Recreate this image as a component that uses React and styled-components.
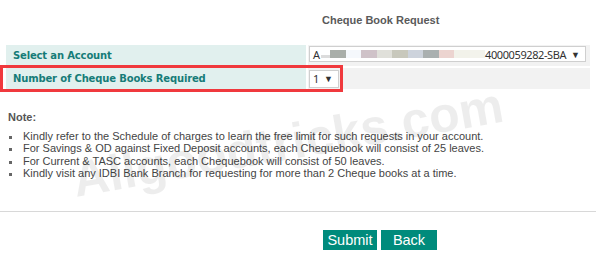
import React from 'react';
import styled, { createGlobalStyle } from 'styled-components';

const GlobalStyle = createGlobalStyle`
    body {
        margin: 0;
        background: #ffffff;
        font-family: "Liberation Sans", Arial, sans-serif;
    }
`;

// pixelated blocks hiding the account holder name
const blurBlocks = ['#dcdcdc', '#a9aea9', '#f5f8fc', '#cfc2c8', '#e0e0da', '#c8c8bc', '#cdd3dc', '#aab0b0', '#ecd4d0', '#f2f2ea', '#f3f3ec'];

const notes = [
    'Kindly refer to the Schedule of charges to learn the free limit for such requests in your account.',
    'For Savings & OD against Fixed Deposit accounts, each Chequebook will consist of 25 leaves.',
    'For Current & TASC accounts, each Chequebook will consist of 50 leaves.',
    'Kindly visit any IDBI Bank Branch for requesting for more than 2 Cheque books at a time.',
];

export default function App() {
    return (
        <>
            <GlobalStyle />
            <Page>
                <Title>Cheque Book Request</Title>
                <FormTable>
                    <Row>
                        <LabelCell>Select an Account</LabelCell>
                        <FieldCell>
                            <Select width="277px">
                                <SelectText>
                                    A
                                    <Blur>
                                        {blurBlocks.map((c, i) => (
                                            <BlurBlock key={c} color={c} first={i === 0} />
                                        ))}
                                    </Blur>
                                    <AccountNo>4000059282-SBA</AccountNo>
                                </SelectText>
                                <Arrow>▼</Arrow>
                            </Select>
                        </FieldCell>
                    </Row>
                    <Row>
                        <LabelCell>Number of Cheque Books Required</LabelCell>
                        <FieldCell>
                            <Select width="30px" tall>
                                <SelectText>1</SelectText>
                                <Arrow>▼</Arrow>
                            </Select>
                        </FieldCell>
                    </Row>
                    <Highlight />
                </FormTable>

                <NoteTitle>Note:</NoteTitle>
                <NoteList>
                    {notes.map((n) => (
                        <li key={n}>{n}</li>
                    ))}
                </NoteList>

                <Divider />

                <Actions>
                    <Button w="54px">Submit</Button>
                    <Button w="56px">Back</Button>
                </Actions>

                <Watermark>Allgoodtricks.com</Watermark>
            </Page>
        </>
    );
}

const Page = styled.div`
    position: relative;
    width: 596px;
    height: 265px;
    overflow: hidden;
    background: #ffffff;
`;

const Title = styled.h1`
    margin: 0;
    padding: 14px 0 0 322px;
    font-size: 11px;
    line-height: 13px;
    font-weight: 700;
    color: #5a5a5a;
`;

const FormTable = styled.div`
    position: relative;
    display: flex;
    flex-direction: column;
    gap: 2px;
    margin: 18px 0 0 6px;
    width: 584px;
`;

const Row = styled.div`
    display: grid;
    grid-template-columns: 300px 1fr;
    gap: 2px;
    height: 21px;
`;

const LabelCell = styled.div`
    display: flex;
    align-items: center;
    padding-left: 7px;
    background: #e1f0ee;
    color: #167c78;
    font-family: "DejaVu Sans", Verdana, sans-serif;
    font-weight: 700;
    font-size: 10px;
    letter-spacing: -0.15px;
`;

const FieldCell = styled.div`
    display: flex;
    align-items: center;
    padding-left: 1px;
    background: #f2f2f2;
`;

const Select = styled.div`
    display: flex;
    align-items: center;
    justify-content: space-between;
    box-sizing: border-box;
    width: ${(p) => p.width};
    height: ${(p) => (p.tall ? '18px' : '16px')};
    margin-top: ${(p) => (p.tall ? '0' : '-3px')};
    padding: 0 5px 0 3px;
    background: #ffffff;
    border: 1px solid #cfcfcf;
    font-family: "Noto Sans", "Open Sans", sans-serif;
    font-size: 11px;
    color: #333333;
`;

const SelectText = styled.span`
    display: flex;
    align-items: center;
    white-space: nowrap;
`;

const Blur = styled.span`
    display: flex;
    flex-shrink: 0;
    height: 8px;
    margin-left: 1px;
`;

const BlurBlock = styled.span`
    flex: 0 0 ${(p) => (p.first ? '9px' : '15.5px')};
    height: ${(p) => (p.first ? '3px' : '8px')};
    align-self: flex-end;
    background: ${(p) => p.color};
`;

const AccountNo = styled.span`
    letter-spacing: -0.4px;
`;

const Arrow = styled.span`
    font-size: 9px;
    color: #333333;
`;

const Highlight = styled.div`
    position: absolute;
    left: -6px;
    top: 20px;
    width: 343px;
    height: 27px;
    box-sizing: border-box;
    border: 3px solid #f0393d;
    pointer-events: none;
`;

const NoteTitle = styled.div`
    margin: 22px 0 0 8px;
    font-size: 11px;
    line-height: 13px;
    font-weight: 700;
    color: #555555;
`;

const NoteList = styled.ul`
    margin: 6px 0 0 0;
    padding: 0 0 0 23px;
    list-style: none;
    font-size: 11px;
    line-height: 12.35px;
    color: #444444;

    li {
        position: relative;
    }

    li::before {
        content: '';
        position: absolute;
        left: -14px;
        top: 6px;
        width: 3px;
        height: 3px;
        background: #666666;
    }
`;

const Divider = styled.hr`
    margin: 32px 0 0 0;
    border: none;
    border-top: 1px solid #d8d8d8;
`;

const Actions = styled.div`
    display: flex;
    gap: 4px;
    margin: 18px 0 0 323px;
`;

const Button = styled.button`
    width: ${(p) => p.w};
    height: 20px;
    padding: 0;
    border: none;
    background: #008b7c;
    color: #ffffff;
    font-family: "Liberation Sans", Arial, sans-serif;
    font-size: 14.5px;
    line-height: 20px;
`;

const Watermark = styled.div`
    position: absolute;
    left: 76px;
    top: 155px;
    font-size: 50px;
    line-height: 50px;
    font-weight: 700;
    color: rgba(0, 0, 0, 0.07);
    transform: rotate(-10deg);
    transform-origin: 0 42px;
    white-space: nowrap;
    pointer-events: none;
`;
